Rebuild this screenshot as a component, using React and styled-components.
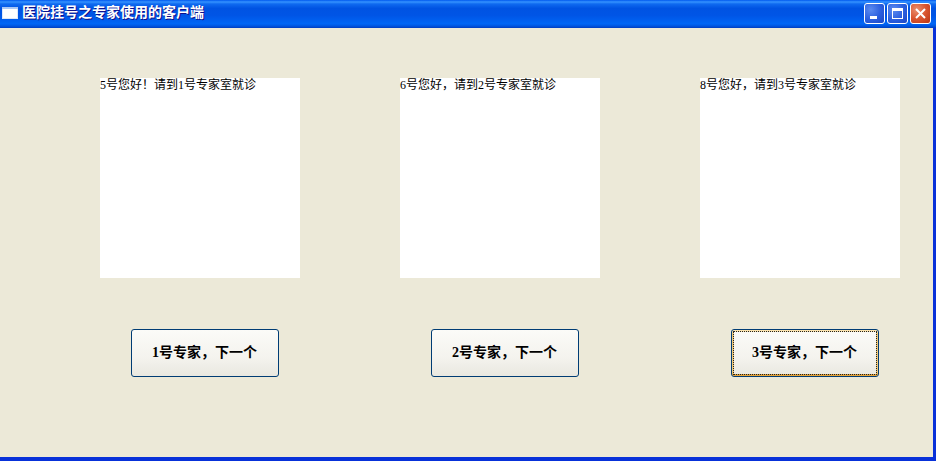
import React from "react";
import styled, { createGlobalStyle } from "styled-components";

const Global = createGlobalStyle`
  html, body { margin: 0; padding: 0; overflow: hidden; background: #ece9d8; }
  * { box-sizing: border-box; }
`;

const Window = styled.div`
  width: 936px;
  height: 461px;
  display: flex;
  flex-direction: column;
  background: #0831d9;
  font-family: "Liberation Serif", "Noto Sans CJK SC", serif;
`;

const TitleBar = styled.div`
  height: 28px;
  flex: none;
  display: flex;
  align-items: center;
  padding: 0 5px 2px 2px;
  background: linear-gradient(180deg, #0058ee 0%, #3593ff 7%, #0f6af0 14%, #0053e2 30%, #0055e6 55%, #0060f0 75%, #0066f5 85%, #0055e0 93%, #003dc0 100%);
`;

const AppIcon = styled.svg`
  width: 16px;
  height: 14px;
  flex: none;
  margin-right: 4px;
`;

const Title = styled.div`
  flex: 1;
  color: #fff;
  font-size: 14px;
  font-weight: 700;
  line-height: 16px;
  text-shadow: 1px 1px 0 #0f1089;
  white-space: nowrap;
`;

const Controls = styled.div`
  display: flex;
  gap: 2px;
`;

const CtrlButton = styled.div`
  width: 21px;
  height: 21px;
  border: 1px solid #fff;
  border-radius: 3px;
  display: flex;
  align-items: center;
  justify-content: center;
  background: ${(p) =>
    p.$close
      ? "radial-gradient(circle at 30% 30%, #ea9070 0%, #d9552f 50%, #b83415 100%)"
      : "radial-gradient(circle at 30% 30%, #5b8bf0 0%, #2a5ede 55%, #1c46c4 100%)"};
`;

const Client = styled.div`
  flex: 1;
  margin: 0 3px 4px 0;
  background: #ece9d8;
  display: grid;
  grid-template-columns: repeat(3, 200px);
  grid-template-rows: 200px auto;
  column-gap: 100px;
  row-gap: 51px;
  align-content: start;
  padding: 50px 0 0 100px;
`;

const Panel = styled.div`
  background: #fff;
  color: #000;
  font-size: 12px;
  line-height: 12px;
  padding-top: 1px;
  white-space: nowrap;
`;

const NextButton = styled.button`
  justify-self: center;
  margin-left: 10px;
  width: 148px;
  height: 48px;
  padding: 0 1px 5px 0;
  border: 1px solid #003c74;
  border-radius: 3px;
  background: linear-gradient(180deg, #fbfbf8 0%, #f4f3ee 60%, #e9e8e0 100%);
  color: #000;
  font-family: inherit;
  font-size: 14px;
  font-weight: 700;
  outline: ${(p) => (p.$focused ? "1px dotted #222" : "none")};
  outline-offset: -3px;
  box-shadow: ${(p) =>
    p.$focused ? "inset 0 -2px 0 #e5a33a, inset 0 2px 0 #fbe3ae, inset 2px 0 0 #f0c878, inset -2px 0 0 #f0c878" : "none"};
`;

const panels = [
  "5号您好！请到1号专家室就诊",
  "6号您好，请到2号专家室就诊",
  "8号您好，请到3号专家室就诊",
];
const buttons = ["1号专家，下一个", "2号专家，下一个", "3号专家，下一个"];

export default function App() {
  return (
    <>
      <Global />
      <Window>
        <TitleBar>
          <AppIcon viewBox="0 0 16 14">
            <rect x="0.5" y="1.5" width="15" height="11" fill="#fff" stroke="#dfe8f8" />
            <rect x="0" y="1" width="16" height="2" fill="#a9c7f5" />
          </AppIcon>
          <Title>医院挂号之专家使用的客户端</Title>
          <Controls>
            <CtrlButton>
              <svg width="13" height="13" viewBox="0 0 13 13">
                <rect x="2" y="9" width="7" height="3" fill="#fff" />
              </svg>
            </CtrlButton>
            <CtrlButton>
              <svg width="13" height="13" viewBox="0 0 13 13" fill="none">
                <rect x="1.5" y="1.5" width="10" height="10" stroke="#fff" />
                <rect x="1" y="1" width="11" height="3" fill="#fff" />
              </svg>
            </CtrlButton>
            <CtrlButton $close>
              <svg width="13" height="13" viewBox="0 0 13 13">
                <path d="M2 2 L11 11 M11 2 L2 11" stroke="#fff" strokeWidth="2" />
              </svg>
            </CtrlButton>
          </Controls>
        </TitleBar>
        <Client>
          {panels.map((t) => (
            <Panel key={t}>{t}</Panel>
          ))}
          {buttons.map((t, i) => (
            <NextButton key={t} $focused={i === 2}>
              {t}
            </NextButton>
          ))}
        </Client>
      </Window>
    </>
  );
}
